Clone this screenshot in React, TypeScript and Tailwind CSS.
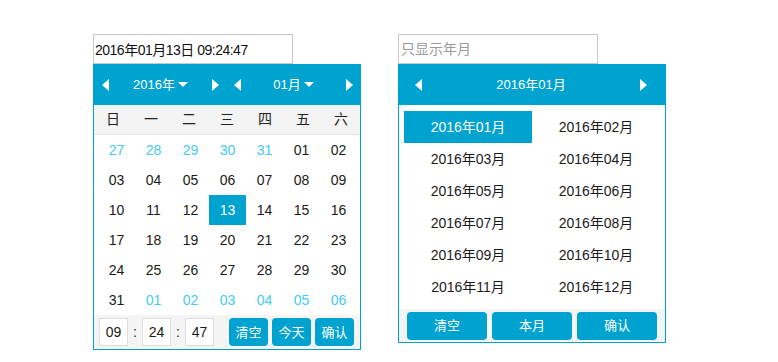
const font = { fontFamily: '"Liberation Sans", "Noto Sans CJK SC", sans-serif' }

const weekdays = ['日', '一', '二', '三', '四', '五', '六']

const days: { d: string; other?: boolean }[] = [
  ...['27', '28', '29', '30', '31'].map(d => ({ d, other: true })),
  ...Array.from({ length: 31 }, (_, i) => ({ d: String(i + 1).padStart(2, '0') })),
  ...['01', '02', '03', '04', '05', '06'].map(d => ({ d, other: true })),
]

const months = Array.from({ length: 12 }, (_, i) => `2016年${String(i + 1).padStart(2, '0')}月`)

function ArrowLeft() {
  return <span className="block w-0 h-0 border-y-[6px] border-y-transparent border-r-[7px] border-r-white" />
}

function ArrowRight() {
  return <span className="block w-0 h-0 border-y-[6px] border-y-transparent border-l-[7px] border-l-white" />
}

function Caret() {
  return <span className="inline-block w-0 h-0 ml-[3px] border-x-[5px] border-x-transparent border-t-[5px] border-t-white" />
}

function Btn({ label, w }: { label: string; w: string }) {
  return (
    <button className={`${w} h-[28px] rounded-[4px] bg-[#00a2d0] text-white text-[13px] leading-none`}>
      {label}
    </button>
  )
}

function DateTimePicker() {
  return (
    <div className="w-[268px]">
      <input
        readOnly
        value="2016年01月13日 09:24:47"
        className="block w-[200px] h-[30px] border border-[#c8c8c8] px-[1px] text-[14px] tracking-[-0.5px] text-[#111] outline-none"
      />
      <div className="border border-t-0 border-[#00a2d0]">
        <div className="h-[41px] bg-[#00a2d0] flex text-white text-[13px]">
          <div className="w-1/2 flex items-center justify-between px-[8px]">
            <ArrowLeft />
            <span className="flex items-center">2016年<Caret /></span>
            <ArrowRight />
          </div>
          <div className="w-1/2 flex items-center justify-between px-[7px]">
            <ArrowLeft />
            <span className="flex items-center">01月<Caret /></span>
            <ArrowRight />
          </div>
        </div>
        <div className="grid grid-cols-7 h-[30px] bg-[#f3f3f3] border-b border-[#e3e3e3] text-[14px] text-[#222]">
          {weekdays.map(w => (
            <div key={w} className="flex items-center justify-center">{w}</div>
          ))}
        </div>
        <div className="grid grid-cols-[repeat(7,37px)] px-[4px] text-[14px]">
          {days.map((x, i) => {
            const sel = !x.other && x.d === '13'
            return (
              <div
                key={i}
                className={`h-[30px] flex items-center justify-center ${
                  sel ? 'bg-[#00a2d0] text-white' : x.other ? 'text-[#44c9f6]' : 'text-[#1a1a1a]'
                }`}
              >
                {x.d}
              </div>
            )
          })}
        </div>
        <div className="h-[34px] bg-[#f4f4f4] flex items-center pl-[5px] pr-[6px] text-[14px] text-[#1a1a1a]">
          {['09', '24', '47'].map((t, i) => (
            <div key={t} className="flex items-center">
              {i > 0 && <span className="w-[14px] text-center">:</span>}
              <span className="w-[29px] h-[28px] bg-white border border-[#dedede] flex items-center justify-center">{t}</span>
            </div>
          ))}
          <div className="ml-auto flex gap-[4px]">
            <Btn label="清空" w="w-[39px]" />
            <Btn label="今天" w="w-[39px]" />
            <Btn label="确认" w="w-[39px]" />
          </div>
        </div>
      </div>
    </div>
  )
}

function MonthPicker() {
  return (
    <div className="w-[268px]">
      <input
        readOnly
        placeholder="只显示年月"
        className="block w-[200px] h-[30px] border border-[#c8c8c8] px-[2px] text-[14px] outline-none placeholder:text-[#9a9a9a]"
      />
      <div className="border border-t-0 border-[#00a2d0]">
        <div className="h-[41px] bg-[#00a2d0] flex items-center justify-between pl-[16px] pr-[18px] text-white text-[13px]">
          <ArrowLeft />
          <span>2016年01月</span>
          <ArrowRight />
        </div>
        <div className="grid grid-cols-2 px-[5px] py-[6px] text-[14px] text-[#1a1a1a]">
          {months.map((m, i) => (
            <div
              key={m}
              className={`h-[32px] flex items-center justify-center ${i === 0 ? 'bg-[#00a2d0] text-white' : ''}`}
            >
              {m}
            </div>
          ))}
        </div>
        <div className="h-[33px] bg-[#f4f4f4] flex items-center justify-between px-[8px]">
          <Btn label="清空" w="w-[80px]" />
          <Btn label="本月" w="w-[80px]" />
          <Btn label="确认" w="w-[80px]" />
        </div>
      </div>
    </div>
  )
}

export default function App() {
  return (
    <div className="w-[778px] h-[362px] bg-white flex items-start gap-[37px] pl-[93px] pt-[34px]" style={font}>
      <DateTimePicker />
      <MonthPicker />
    </div>
  )
}
